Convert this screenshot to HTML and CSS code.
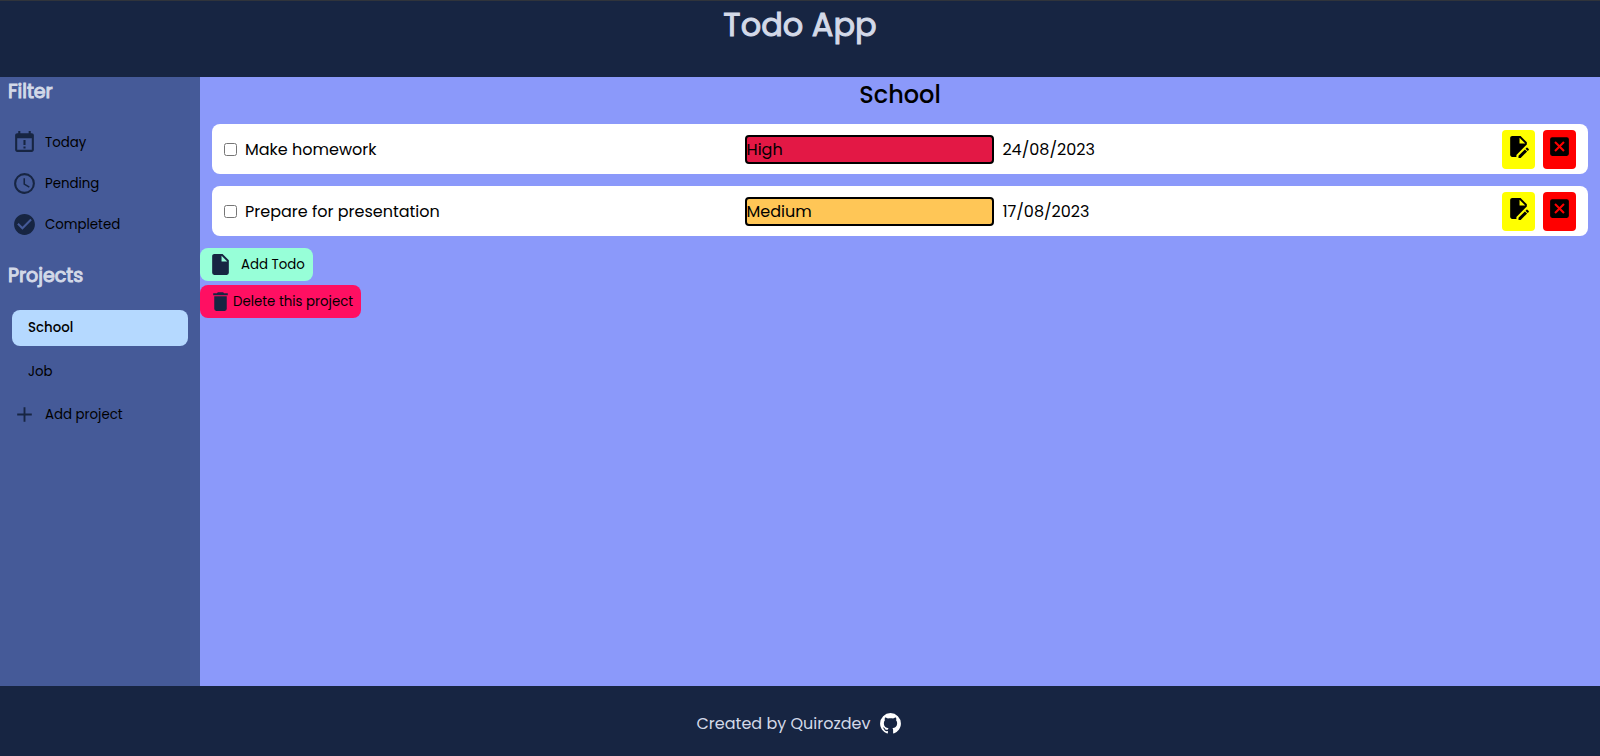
FILE: index.html
```html
<!DOCTYPE html>
<html lang="en">
<head>
<meta charset="utf-8">
<meta name="viewport" content="width=device-width, initial-scale=1">
<title>Todo App</title>
<link rel="stylesheet" href="styles.css">
</head>
<body>
<header class="header"><h1 class="title">Todo App</h1></header>
<div class="content">
  <nav class="sidebar">
    <h2 class="side-title">Filter</h2>
    <div class="filters">
      <button class="filter" type="button"><svg class="icon" viewBox="0 0 24 24"><path d="M19 3H18V1H16V3H8V1H6V3H5C3.9 3 3 3.9 3 5V19C3 20.1 3.9 21 5 21H19C20.1 21 21 20.1 21 19V5C21 3.9 20.1 3 19 3M19 19H5V8H19V19M13 14.5H11V9.5H13V14.5M13 17.8H11V15.9H13V17.8Z"/></svg>Today</button>
      <button class="filter" type="button"><svg class="icon" viewBox="0 0 24 24"><path d="M12 20A8 8 0 0 0 20 12A8 8 0 0 0 12 4A8 8 0 0 0 4 12A8 8 0 0 0 12 20M12 2A10 10 0 0 1 22 12A10 10 0 0 1 12 22C6.47 22 2 17.5 2 12A10 10 0 0 1 12 2M12.5 7V12.25L17 14.92L16.25 16.15L11 13V7H12.5Z"/></svg>Pending</button>
      <button class="filter" type="button"><svg class="icon" viewBox="0 0 24 24"><path d="M12 2C6.5 2 2 6.5 2 12S6.5 22 12 22 22 17.5 22 12 17.5 2 12 2M10 17L5 12L6.41 10.59L10 14.17L17.59 6.58L19 8L10 17Z"/></svg>Completed</button>
    </div>
    <h2 class="side-title">Projects</h2>
    <div class="projects">
      <button class="project project-active" type="button">School</button>
      <button class="project" type="button">Job</button>
    </div>
    <button class="filter" type="button"><svg class="icon" viewBox="0 0 24 24"><path d="M19 12.9H12.9V19H11.1V12.9H5V11.1H11.1V5H12.9V11.1H19V12.9Z"/></svg>Add project</button>
  </nav>
  <main class="main">
    <h2 class="project-title">School</h2>
    <ul class="todos">
      <li class="todo">
        <input class="check" type="checkbox" id="todo-1">
        <label class="name" for="todo-1">Make homework</label>
        <span class="priority high">High</span>
        <span class="date">24/08/2023</span>
        <button class="action edit" type="button" aria-label="Edit"><svg class="icon" viewBox="0 0 24 24"><path d="M6 2C4.89 2 4 2.9 4 4V20C4 21.11 4.89 22 6 22H10V20.09L20 10.09V8L14 2H6M13 3.5L18.5 9H13V3.5M20.15 13C20 13 19.86 13.05 19.75 13.16L18.73 14.18L20.82 16.26L21.84 15.25C22.05 15.03 22.05 14.67 21.84 14.46L20.54 13.16C20.43 13.05 20.29 13 20.15 13M18.14 14.77L12 20.92V23H14.08L20.23 16.85L18.14 14.77Z"/></svg></button>
        <button class="action remove" type="button" aria-label="Delete"><svg class="icon" viewBox="0 0 24 24"><path d="M19 3H5A2 2 0 0 0 3 5V19A2 2 0 0 0 5 21H19A2 2 0 0 0 21 19V5A2 2 0 0 0 19 3M15.6 17L12 13.4L8.4 17L7 15.6L10.6 12L7 8.4L8.4 7L12 10.6L15.6 7L17 8.4L13.4 12L17 15.6L15.6 17Z"/></svg></button>
      </li>
      <li class="todo">
        <input class="check" type="checkbox" id="todo-2">
        <label class="name" for="todo-2">Prepare for presentation</label>
        <span class="priority medium">Medium</span>
        <span class="date">17/08/2023</span>
        <button class="action edit" type="button" aria-label="Edit"><svg class="icon" viewBox="0 0 24 24"><path d="M6 2C4.89 2 4 2.9 4 4V20C4 21.11 4.89 22 6 22H10V20.09L20 10.09V8L14 2H6M13 3.5L18.5 9H13V3.5M20.15 13C20 13 19.86 13.05 19.75 13.16L18.73 14.18L20.82 16.26L21.84 15.25C22.05 15.03 22.05 14.67 21.84 14.46L20.54 13.16C20.43 13.05 20.29 13 20.15 13M18.14 14.77L12 20.92V23H14.08L20.23 16.85L18.14 14.77Z"/></svg></button>
        <button class="action remove" type="button" aria-label="Delete"><svg class="icon" viewBox="0 0 24 24"><path d="M19 3H5A2 2 0 0 0 3 5V19A2 2 0 0 0 5 21H19A2 2 0 0 0 21 19V5A2 2 0 0 0 19 3M15.6 17L12 13.4L8.4 17L7 15.6L10.6 12L7 8.4L8.4 7L12 10.6L15.6 7L17 8.4L13.4 12L17 15.6L15.6 17Z"/></svg></button>
      </li>
    </ul>
    <div class="tools">
      <button class="tool add" type="button"><svg class="icon" viewBox="0 0 24 24"><path d="M13 9V3.5L18.5 9M6 2C4.89 2 4 2.89 4 4V20A2 2 0 0 0 6 22H18A2 2 0 0 0 20 20V8L14 2H6Z"/></svg>Add Todo</button>
      <button class="tool delete" type="button"><svg class="icon" viewBox="0 0 24 24"><path d="M19 4H15.5L14.5 3H9.5L8.5 4H5V6H19M6 19A2 2 0 0 0 8 21H16A2 2 0 0 0 18 19V7H6V19Z"/></svg>Delete this project</button>
    </div>
  </main>
</div>
<footer class="footer">
  <p class="credit">Created by Quirozdev</p>
  <a class="github" href="#" aria-label="GitHub"><svg class="icon" viewBox="0 0 24 24"><path d="M12 2A10 10 0 0 0 2 12C2 16.42 4.87 20.17 8.84 21.5C9.34 21.58 9.5 21.27 9.5 21V19.31C6.73 19.91 6.14 17.97 6.14 17.97C5.68 16.81 5.03 16.5 5.03 16.5C4.12 15.88 5.1 15.9 5.1 15.9C6.1 15.97 6.63 16.93 6.63 16.93C7.5 18.45 8.97 18 9.54 17.76C9.63 17.11 9.89 16.67 10.17 16.42C7.95 16.17 5.62 15.31 5.62 11.5C5.62 10.39 6 9.5 6.65 8.79C6.55 8.54 6.2 7.5 6.75 6.15C6.75 6.15 7.59 5.88 9.5 7.17C10.29 6.95 11.15 6.84 12 6.84S13.71 6.95 14.5 7.17C16.41 5.88 17.25 6.15 17.25 6.15C17.8 7.5 17.45 8.54 17.35 8.79C18 9.5 18.38 10.39 18.38 11.5C18.38 15.32 16.04 16.16 13.81 16.41C14.17 16.72 14.5 17.33 14.5 18.26V21C14.5 21.27 14.66 21.59 15.17 21.5C19.14 20.16 22 16.42 22 12A10 10 0 0 0 12 2Z"/></svg></a>
</footer>
</body>
</html>
```
FILE: styles.css
```css
* { box-sizing: border-box; margin: 0; padding: 0; }

body {
  display: flex;
  flex-direction: column;
  min-height: 100vh;
  font-family: Poppins, Inter, "Open Sans", sans-serif;
  font-size: 16px;
  font-weight: 400;
  line-height: 24px;
  color: #000;
}

button { border: 0; font-family: inherit; color: inherit; cursor: pointer; }

.icon { display: block; flex: none; width: 25px; height: 25px; fill: #172542; }

.header {
  padding-bottom: 28px;
  border-top: 1px solid #30343b;
  background: #172542;
  text-align: center;
}
.title {
  font-size: 32px;
  font-weight: 400;
  line-height: 48px;
  color: #d3d9e8;
  -webkit-text-stroke: 1px #d3d9e8;
}

.content { display: flex; flex: 1; }

.sidebar { width: 200px; background: #455a98; }
.side-title {
  padding-left: 8px;
  font-size: 19px;
  font-weight: 400;
  line-height: 30px;
  color: #d3d9e8;
  -webkit-text-stroke: 1px #d3d9e8;
}
.filters { padding: 15px 0 16px; }
.filter {
  display: flex;
  align-items: center;
  gap: 8px;
  width: 100%;
  height: 41px;
  padding-left: 12px;
  background: none;
  text-align: left;
}
.projects { display: grid; gap: 8px; padding: 19px 12px 4px; }
.project {
  height: 36px;
  padding-left: 16px;
  border-radius: 8px;
  background: none;
  text-align: left;
}
.project-active { background: #b5d9ff; font-weight: 500; }

.main { flex: 1; background: #8b99fa; }
.project-title { font-size: 24px; font-weight: 500; line-height: 35px; text-align: center; }
.todos { display: grid; gap: 12px; padding: 12px; list-style: none; }
.todo {
  display: flex;
  align-items: center;
  gap: 8px;
  padding: 6px 12px 5px;
  border-radius: 8px;
  background: #fff;
}
.check { width: 13px; height: 13px; }
.name, .date { flex: 2; }
.priority { flex: 1; border: 2px solid #000; border-radius: 4px; line-height: 25px; }
.high { background: #e31845; }
.medium { background: #ffc656; }
.action {
  width: 33px;
  height: 39px;
  padding: 4px 4px 10px;
  border-radius: 4px;
}
.action .icon { fill: #000; }
.edit { background: #ff0; }
.remove { background: #f00; }

.tools { display: grid; justify-items: start; gap: 4px; }
.tool {
  display: flex;
  align-items: center;
  height: 33px;
  padding: 0 8px;
  border-radius: 8px;
}
.add { gap: 8px; background: #97ffd8; }
.delete { background: #ff0f62; }

.footer {
  display: flex;
  align-items: center;
  justify-content: center;
  gap: 8px;
  height: 70px;
  padding-top: 5px;
  background: #172542;
  color: #d3d9e8;
}
.github .icon { fill: #fff; }
```
